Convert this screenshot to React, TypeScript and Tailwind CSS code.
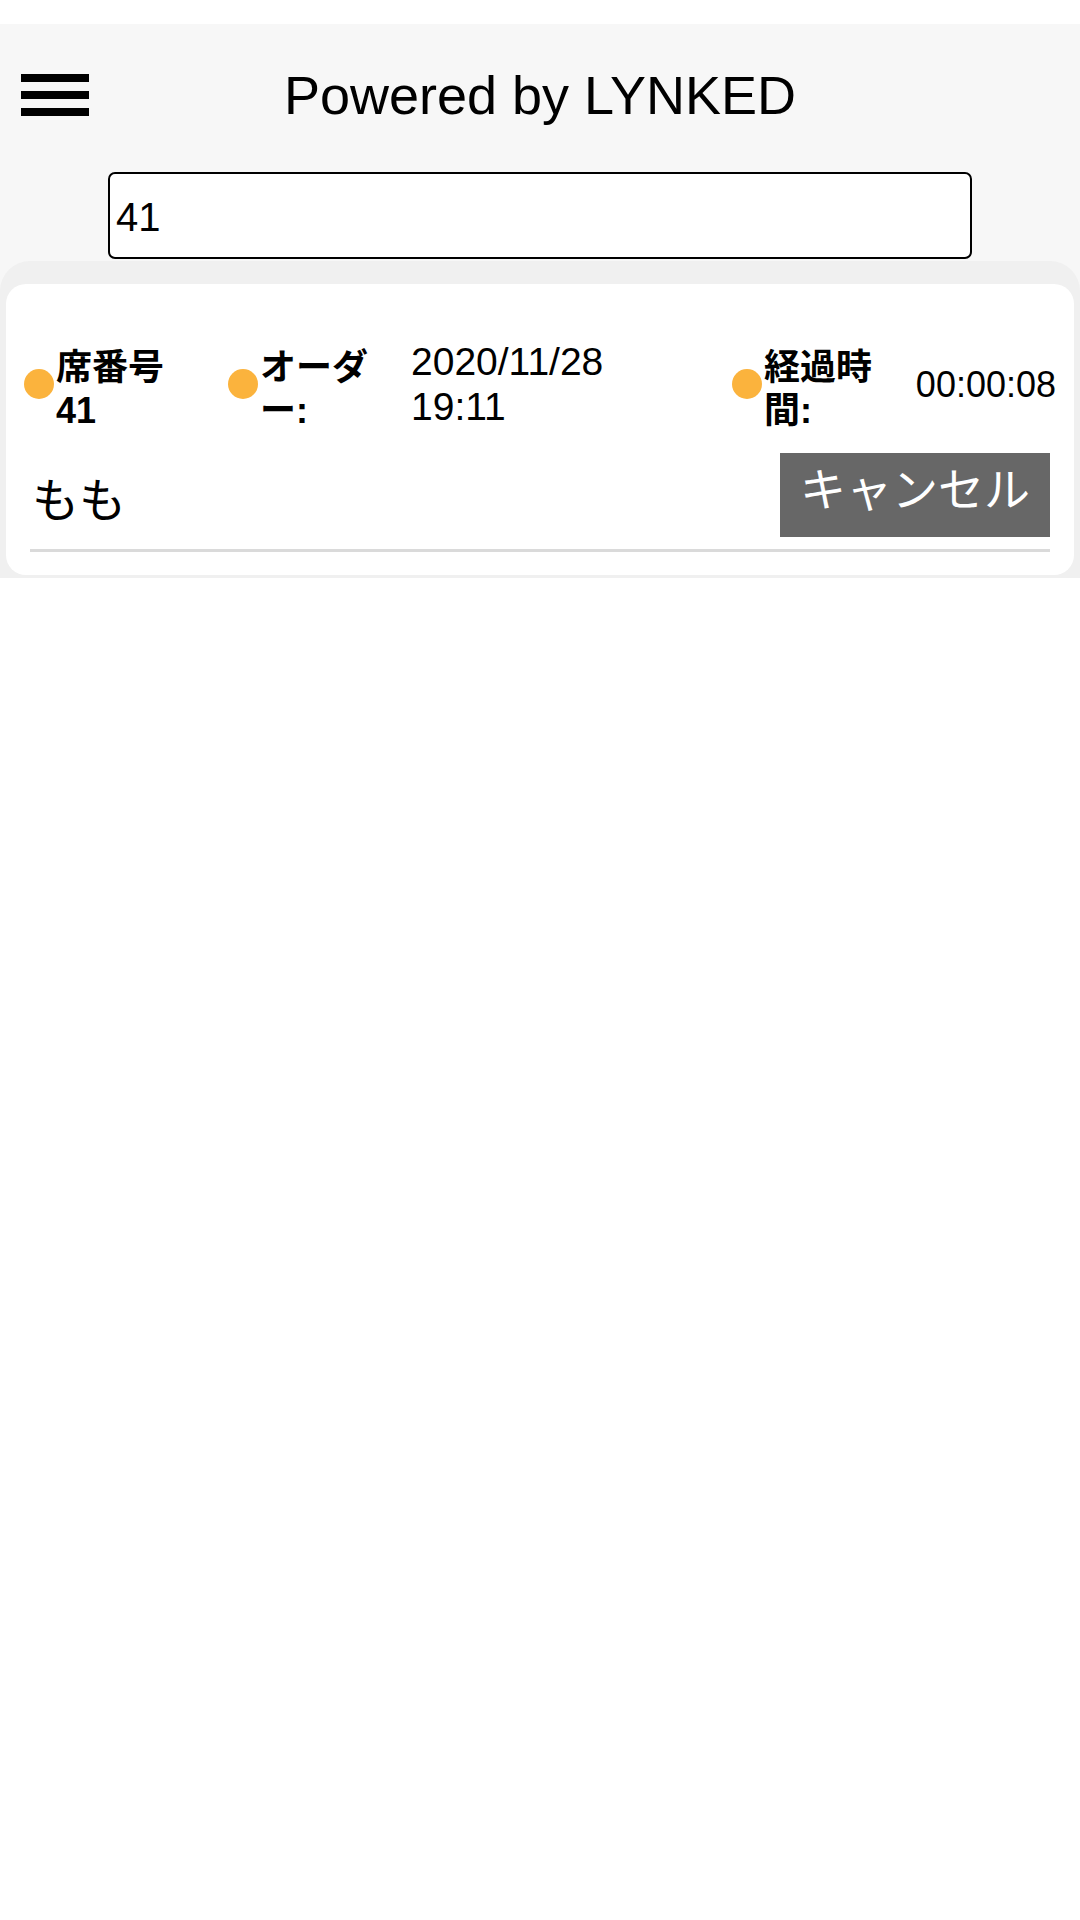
import React from 'react';

const FONT = "font-['Liberation_Sans','Noto_Sans_CJK_JP',sans-serif]";

function Dot() {
  return <span className="h-[30px] w-[30px] shrink-0 rounded-full bg-[#fbb33d]" />;
}

export default function App() {
  return (
    <div className={`min-h-screen bg-white pt-[24px] text-black ${FONT}`}>
      <div className="bg-[#f7f7f7]">
        {/* Header */}
        <div className="grid h-[142px] grid-cols-[1fr_auto_1fr] items-center">
          <div className="flex flex-col gap-[9px] pl-[21px]">
            <span className="block h-[8px] w-[68px] bg-black" />
            <span className="block h-[8px] w-[68px] bg-black" />
            <span className="block h-[8px] w-[68px] bg-black" />
          </div>
          <h1 className="text-[54px] leading-none font-normal">Powered by LYNKED</h1>
          <div />
        </div>

        {/* Search */}
        <div className="mt-[6px] flex justify-center">
          <input
            defaultValue="41"
            className="h-[87px] w-[80%] rounded-[7px] border-2 border-black bg-white px-[6px] pt-[3px] text-[40px] outline-none"
          />
        </div>

        {/* Orders */}
        <div className="mt-[2px] rounded-t-[30px] bg-[#f0f0f0] px-[6px] pt-[23px] pb-[3px]">
          <div className="rounded-[20px] bg-white pt-[55px] pb-[23px]">
            <div className="flex h-[90px] items-center px-[18px]">
              <div className="flex w-[204px] shrink-0 items-center">
                <Dot />
                <div className="ml-[2px] pt-[10px] text-[36px] leading-[43px] font-bold">
                  <div>席番号</div>
                  <div>41</div>
                </div>
              </div>
              <div className="flex w-[504px] shrink-0 items-center">
                <Dot />
                <div className="ml-[2px] w-[151px] pt-[10px] text-[36px] leading-[43px] font-bold">
                  <div>オーダ</div>
                  <div>ー:</div>
                </div>
                <div className="text-[39px] leading-[45px]">
                  <div>2020/11/28</div>
                  <div>19:11</div>
                </div>
              </div>
              <div className="flex flex-1 items-center">
                <Dot />
                <div className="ml-[2px] pt-[10px] text-[36px] leading-[43px] font-bold">
                  <div>経過時</div>
                  <div>間:</div>
                </div>
                <div className="ml-auto text-[36px] leading-[45px]">00:00:08</div>
              </div>
            </div>

            <div className="mt-[24px] flex items-center justify-between px-[24px]">
              <span className="pt-[10px] pl-[2px] text-[47px] leading-none">もも</span>
              <button className="flex h-[84px] items-center bg-[#676767] px-[20px] pb-[10px] text-[46px] leading-none text-white">
                キャンセル
              </button>
            </div>

            <div className="mx-[24px] mt-[12px] h-[3px] bg-[#dadada]" />
          </div>
        </div>
      </div>
    </div>
  );
}
